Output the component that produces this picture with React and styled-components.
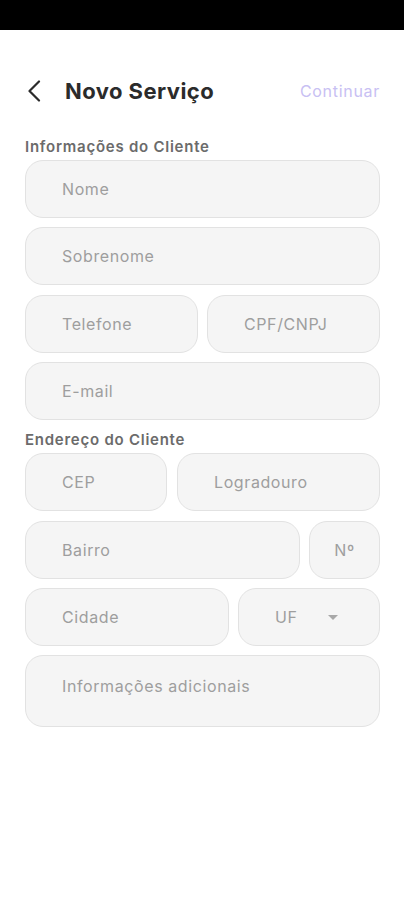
import React from "react";
import styled, { createGlobalStyle } from "styled-components";

const Global = createGlobalStyle`
  html, body { margin: 0; padding: 0; background: #ffffff; }
  body { font-family: Inter, "Noto Sans", sans-serif; }
  * { box-sizing: border-box; }
`;

const Screen = styled.div`
  width: 404px;
  min-height: 900px;
  background: #fff;
  display: flex;
  flex-direction: column;
`;

const StatusBar = styled.div`
  height: 30px;
  background: #000;
`;

const Content = styled.div`
  padding: 0 24px 0 25px;
  display: flex;
  flex-direction: column;
`;

const Header = styled.div`
  margin-top: 41px;
  height: 40px;
  display: flex;
  align-items: center;
`;

const BackButton = styled.button`
  border: none;
  background: none;
  padding: 0;
  margin-left: 2px;
  width: 18px;
  height: 24px;
  display: flex;
  align-items: center;
  cursor: pointer;
`;

const Title = styled.h1`
  margin: 0 0 0 20px;
  font-size: 22px;
  font-weight: 700;
  color: #2b2b2b;
  letter-spacing: 0.45px;
  flex: 1;
`;

const Continue = styled.span`
  font-size: 16px;
  color: #c8c0f3;
  font-weight: 400;
  letter-spacing: 0.7px;
`;

const SectionLabel = styled.div`
  margin-top: ${(p) => p.$top}px;
  margin-bottom: 4px;
  font-size: 15px;
  font-weight: 600;
  color: #6b6b6b;
  line-height: 18px;
  letter-spacing: 0.75px;
`;

const Fields = styled.div`
  display: flex;
  flex-direction: column;
  gap: 9.4px;
`;

const Row = styled.div`
  display: grid;
  grid-template-columns: ${(p) => p.$cols};
  column-gap: ${(p) => p.$gap || 9}px;
`;

const Field = styled.div`
  height: ${(p) => p.$h || 58}px;
  background: #f5f5f5;
  border: 1px solid #e2e2e2;
  border-radius: 18px;
  display: flex;
  align-items: ${(p) => (p.$top ? "flex-start" : "center")};
  justify-content: ${(p) => (p.$center ? "center" : "flex-start")};
  padding: ${(p) => (p.$top ? "20px 16px 0 36px" : p.$center ? "0" : "0 16px 0 36px")};
  font-size: 16px;
  letter-spacing: 0.6px;
  color: #9e9e9e;
  line-height: 20px;
  white-space: nowrap;
`;

const SelectInner = styled.div`
  display: flex;
  align-items: center;
  gap: 30px;
`;

const Caret = styled.span`
  width: 0;
  height: 0;
  border-left: 5px solid transparent;
  border-right: 5px solid transparent;
  border-top: 5px solid #a8a8a8;
  margin-top: 1px;
`;

export default function App() {
  return (
    <>
      <Global />
      <Screen>
        <StatusBar />
        <Content>
          <Header>
            <BackButton aria-label="Voltar">
              <svg width="14" height="22" viewBox="0 0 14 22" fill="none">
                <path d="M12 1.5 L2.5 11 L12 20.5" stroke="#2b2b2b" strokeWidth="2.2" strokeLinecap="round" strokeLinejoin="round" />
              </svg>
            </BackButton>
            <Title>Novo Serviço</Title>
            <Continue>Continuar</Continue>
          </Header>

          <SectionLabel $top={27}>Informações do Cliente</SectionLabel>
          <Fields>
            <Field>Nome</Field>
            <Field>Sobrenome</Field>
            <Row $cols="173px 173px" $gap={9}>
              <Field>Telefone</Field>
              <Field>CPF/CNPJ</Field>
            </Row>
            <Field>E-mail</Field>
          </Fields>

          <SectionLabel $top={11}>Endereço do Cliente</SectionLabel>
          <Fields>
            <Row $cols="142px 203px" $gap={10}>
              <Field>CEP</Field>
              <Field>Logradouro</Field>
            </Row>
            <Row $cols="275px 71px" $gap={9}>
              <Field>Bairro</Field>
              <Field $center>Nº</Field>
            </Row>
            <Row $cols="204px 142px" $gap={9}>
              <Field>Cidade</Field>
              <Field>
                <SelectInner>
                  UF
                  <Caret />
                </SelectInner>
              </Field>
            </Row>
            <Field $h={72} $top>Informações adicionais</Field>
          </Fields>
        </Content>
      </Screen>
    </>
  );
}
